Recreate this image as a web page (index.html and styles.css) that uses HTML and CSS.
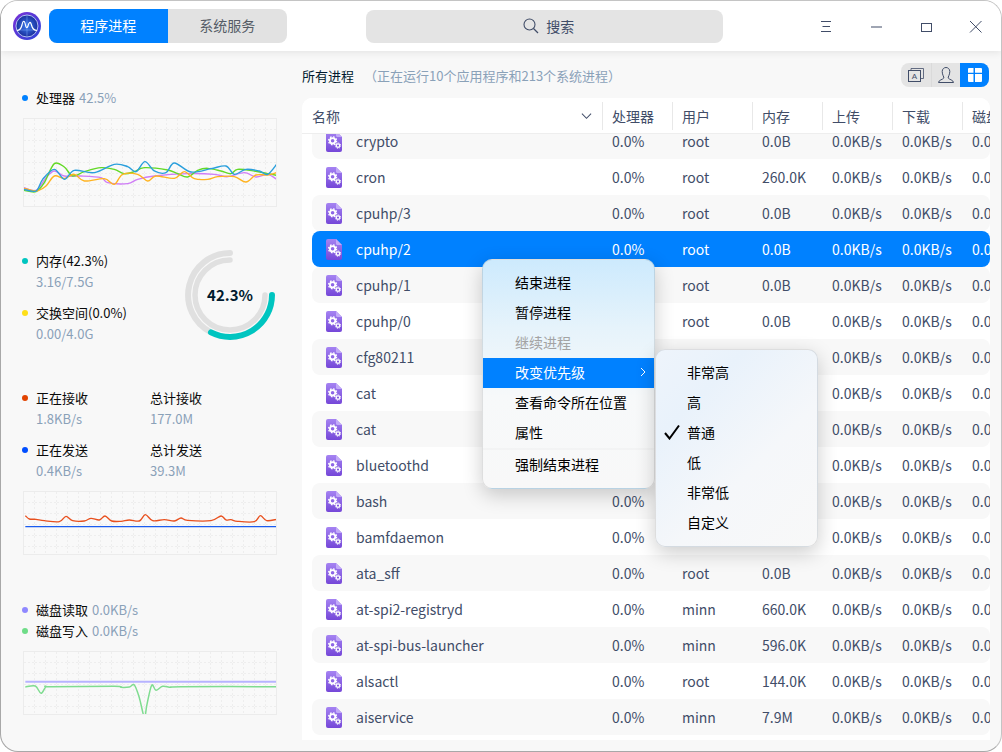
FILE: index.html
```html
<!DOCTYPE html>
<html lang="zh-CN">
<head>
  <meta charset="UTF-8">
  <meta name="viewport" content="width=device-width, initial-scale=1">
  <title>系统监视器</title>
  <link rel="stylesheet" href="styles.css">
</head>
<body>

<svg class="defs">
  <defs>
    <linearGradient id="docFill" x1="0" y1="0" x2="0" y2="1">
      <stop offset="0" stop-color="#a583f2"/>
      <stop offset="1" stop-color="#7547d8"/>
    </linearGradient>
    <linearGradient id="logoRing" x1="0" y1="0" x2="1" y2="1">
      <stop offset="0" stop-color="#7a2fd6"/>
      <stop offset="1" stop-color="#2b45d8"/>
    </linearGradient>
    <radialGradient id="logoFace">
      <stop offset="0" stop-color="#3a7cf0"/>
      <stop offset="1" stop-color="#1a2f9c"/>
    </radialGradient>
    <pattern id="grid" width="11" height="11" patternUnits="userSpaceOnUse">
      <path d="M10.5 0V11M0 10.5H11" stroke="#eeeeee" stroke-width="1" stroke-dasharray="2 2" fill="none"/>
    </pattern>
    <symbol id="proc" viewBox="0 0 16 21">
      <path d="M2 0H10L16 6V19A2 2 0 0 1 14 21H2A2 2 0 0 1 0 19V2A2 2 0 0 1 2 0Z" fill="url(#docFill)"/>
      <path d="M10 0L16 6H11.5A1.5 1.5 0 0 1 10 4.5Z" fill="#c2aaf8"/>
      <circle cx="6.6" cy="9.8" r="2.7" fill="none" stroke="#fff" stroke-width="1.8"/>
      <circle cx="6.6" cy="9.8" r="4" fill="none" stroke="#fff" stroke-width="1.3" stroke-dasharray="1.6 1.54"/>
      <circle cx="12" cy="14.6" r="1.7" fill="none" stroke="#fff" stroke-width="1.2"/>
      <circle cx="12" cy="14.6" r="2.7" fill="none" stroke="#fff" stroke-width="1" stroke-dasharray="1.1 1.02"/>
    </symbol>
  </defs>
</svg>

<div class="window">

  <header class="titlebar">
    <svg class="logo" viewBox="0 0 28 28">
      <circle cx="14" cy="14" r="14" fill="url(#logoRing)"/>
      <circle cx="14" cy="14" r="11" fill="url(#logoFace)"/>
      <circle cx="14" cy="14" r="11" fill="none" stroke="#cfe2ff" stroke-width=".8"/>
      <path d="M4 18H24M14 3V25" stroke="#7fa8f5" stroke-width=".5"/>
      <path d="M4 18.5C7 18.5 8 17 9 13C10 8 11.5 8 12.5 13C13 16 14 16.5 15 14C16 10 17.5 9 18.5 13C19.5 17 21 18.5 24 18.5" fill="none" stroke="#fff" stroke-width="1.2"/>
    </svg>
    <div class="tabs">
      <div class="tab tab-on">程序进程</div>
      <div class="tab">系统服务</div>
    </div>
    <div class="search">
      <svg class="search-icon" viewBox="0 0 16 16">
        <circle cx="6.5" cy="6.5" r="5.5" fill="none" stroke="#414d68" stroke-width="1.1"/>
        <path d="M10.5 10.5L15 15" stroke="#414d68" stroke-width="1.2"/>
      </svg>
      <span>搜索</span>
    </div>
    <div class="win-btns">
      <div class="win-btn"><svg viewBox="0 0 16 16"><path d="M3 3.500H13M4.500 8.500H12M3 13.500H13" stroke="#414d68" fill="none"/></svg></div>
      <div class="win-btn"><svg viewBox="0 0 16 16"><path d="M3 9H14" stroke="#414d68" stroke-width="1.100" fill="none"/></svg></div>
      <div class="win-btn"><svg viewBox="0 0 16 16"><rect x="3.500" y="5.500" width="10" height="8" stroke="#414d68" fill="none"/></svg></div>
      <div class="win-btn"><svg viewBox="0 0 16 16"><path d="M2 3L13.500 14.500M13.500 3L2 14.500" stroke="#414d68" fill="none"/></svg></div>
    </div>
  </header>

  <div class="content">

    <aside class="sidebar">

      <section class="sec-cpu">
        <div class="metric-head"><i class="dot dot-cpu"></i><span>处理器</span><span class="val">42.5%</span></div>
        <svg class="chart chart-tall">
          <rect width="100%" height="100%" fill="url(#grid)"/>
          <g transform="scale(.3333) translate(-69 -354)" fill="none" stroke-width="4.200">
            <path stroke="#cf7df6" data-pts="69,560 105,568 135,530 160,510 190,525 240,525 300,530 320,545 380,548 410,535 460,525 560,518 640,520 680,527 730,515 765,528 800,520 827,535"/>
            <path stroke="#62d926" data-pts="69,568 105,572 130,545 160,488 190,498 215,525 250,512 300,500 340,505 370,518 400,512 430,500 500,507 530,518 560,528 590,508 620,502 660,510 690,518 710,505 760,510 800,518 827,523"/>
            <path stroke="#ffb320" data-pts="69,562 105,570 135,555 160,525 190,532 220,520 250,540 310,533 340,550 365,520 410,520 440,540 465,525 520,532 550,512 580,533 620,535 650,527 700,527 735,543 765,522 800,522 827,515"/>
            <path stroke="#2a9fdc" data-pts="69,565 105,570 125,535 160,505 190,535 220,508 280,515 340,490 380,497 405,512 432,482 460,510 495,515 520,486 570,513 630,503 675,495 700,520 735,505 775,510 800,520 827,490"/>
          </g>
        </svg>
      </section>

      <section class="sec-mem">
        <div class="mem-text">
          <div class="metric">
            <div class="metric-head"><i class="dot dot-mem"></i><span>内存(42.3%)</span></div>
            <div class="val metric-val">3.16/7.5G</div>
          </div>
          <div class="metric">
            <div class="metric-head"><i class="dot dot-swap"></i><span>交换空间(0.0%)</span></div>
            <div class="val metric-val">0.00/4.0G</div>
          </div>
        </div>
        <div class="gauge">
          <svg viewBox="0 0 90 90">
            <g fill="none" stroke-linecap="round">
              <path d="M26 82.400A42 42 0 0 1 45 3" stroke="#e0e0e0" stroke-width="6"/>
              <path d="M80 45A35 35 0 1 1 45 10" stroke="#e0e0e0" stroke-width="5.500"/>
              <path d="M87 45A42 42 0 0 1 26 82.400" stroke="#00c5c0" stroke-width="6"/>
            </g>
          </svg>
          <div class="gauge-num">42.3%</div>
        </div>
      </section>

      <section class="sec-net">
        <div class="net-grid">
          <div class="metric">
            <div class="metric-head"><i class="dot dot-recv"></i><span>正在接收</span></div>
            <div class="val metric-val">1.8KB/s</div>
          </div>
          <div class="metric">
            <div>总计接收</div>
            <div class="val">177.0M</div>
          </div>
          <div class="metric">
            <div class="metric-head"><i class="dot dot-send"></i><span>正在发送</span></div>
            <div class="val metric-val">0.4KB/s</div>
          </div>
          <div class="metric">
            <div>总计发送</div>
            <div class="val">39.3M</div>
          </div>
        </div>
        <svg class="chart">
          <rect width="100%" height="100%" fill="url(#grid)"/>
          <g transform="scale(.3333) translate(-69 -784)" fill="none" stroke-width="4">
            <path stroke="#e8501e" data-pts="73,855 85,865 105,866 130,870 175,873 195,857 215,870 250,871 270,863 295,868 312,856 332,871 360,872 385,868 415,871 433,852 455,870 490,867 520,871 540,862 560,869 630,870 660,856 675,868 690,867 710,872 760,873 778,855 797,870 827,866"/>
            <path stroke="#1a5cf0" d="M73 888H827"/>
          </g>
        </svg>
      </section>

      <section class="sec-disk">
        <div class="metric-head"><i class="dot dot-read"></i><span>磁盘读取</span><span class="val">0.0KB/s</span></div>
        <div class="metric-head"><i class="dot dot-write"></i><span>磁盘写入</span><span class="val">0.0KB/s</span></div>
        <svg class="chart">
          <rect width="100%" height="100%" fill="url(#grid)"/>
          <g transform="scale(.3333) translate(-69 -183)" fill="none">
            <path stroke="#b7b3ff" stroke-width="6" d="M73 272H827"/>
            <path stroke="#7fdc90" stroke-width="4.500" data-pts="73,288 103,285 120,307 135,287 150,287 340,286 360,289 385,288 400,282 415,320 430,378 438,340 452,283 465,298 485,286 510,289 540,287 827,287"/>
          </g>
        </svg>
      </section>

    </aside>

    <main class="main">
      <div class="main-top">
        <div class="heading">所有进程<span class="heading-sub">（正在运行10个应用程序和213个系统进程）</span></div>
        <div class="views">
          <div class="view">
            <svg class="view-text" viewBox="0 0 16 14"><path d="M3 2.500V.5H15.500V10.500H12.500" fill="none" stroke="#414d68" stroke-width=".8"/><rect x=".5" y="2.500" width="12" height="11" fill="none" stroke="#414d68"/><text x="6.500" y="11" class="view-a">A</text></svg>
          </div>
          <div class="view">
            <svg viewBox="0 0 18 18"><path d="M1.500 16.500H16.500C16.500 14 12 13.500 11.200 12C10.800 11 12.800 9 12.800 5.500C12.800 3 11 1.500 9 1.500C7 1.500 5.200 3 5.200 5.500C5.200 9 7.200 11 6.800 12C6 13.500 1.500 14 1.500 16.500Z" fill="none" stroke="#414d68"/></svg>
          </div>
          <div class="view view-on">
            <svg viewBox="0 0 14 14"><path d="M1 0H5.500V4.700H0V1A1 1 0 0 1 1 0ZM7 0H13A1 1 0 0 1 14 1V4.700H7ZM0 6H5.500V14H1A1 1 0 0 1 0 13ZM7 6H14V13A1 1 0 0 1 13 14H7Z" fill="#fff"/></svg>
          </div>
        </div>
      </div>

      <div class="table">
        <div class="thead">
          <div class="th th-name">名称<svg class="sort" viewBox="0 0 12 8"><path d="M1 1.500L6 6.500L11 1.500" fill="none" stroke="#414d68" stroke-width="1.100"/></svg></div>
          <div class="th">处理器</div>
          <div class="th">用户</div>
          <div class="th">内存</div>
          <div class="th">上传</div>
          <div class="th">下载</div>
          <div class="th">磁盘读取</div>
        </div>
        <div class="rows">
          <div class="row alt"><div class="name"><svg class="proc"><use href="#proc"/></svg>crypto</div><div>0.0%</div><div>root</div><div>0.0B</div><div>0.0KB/s</div><div>0.0KB/s</div><div>0.0KB/s</div></div>
          <div class="row"><div class="name"><svg class="proc"><use href="#proc"/></svg>cron</div><div>0.0%</div><div>root</div><div>260.0K</div><div>0.0KB/s</div><div>0.0KB/s</div><div>0.0KB/s</div></div>
          <div class="row alt"><div class="name"><svg class="proc"><use href="#proc"/></svg>cpuhp/3</div><div>0.0%</div><div>root</div><div>0.0B</div><div>0.0KB/s</div><div>0.0KB/s</div><div>0.0KB/s</div></div>
          <div class="row selected"><div class="name"><svg class="proc"><use href="#proc"/></svg>cpuhp/2</div><div>0.0%</div><div>root</div><div>0.0B</div><div>0.0KB/s</div><div>0.0KB/s</div><div>0.0KB/s</div></div>
          <div class="row alt"><div class="name"><svg class="proc"><use href="#proc"/></svg>cpuhp/1</div><div></div><div>root</div><div>0.0B</div><div>0.0KB/s</div><div>0.0KB/s</div><div>0.0KB/s</div></div>
          <div class="row"><div class="name"><svg class="proc"><use href="#proc"/></svg>cpuhp/0</div><div></div><div>root</div><div>0.0B</div><div>0.0KB/s</div><div>0.0KB/s</div><div>0.0KB/s</div></div>
          <div class="row alt"><div class="name"><svg class="proc"><use href="#proc"/></svg>cfg80211</div><div></div><div></div><div></div><div>0.0KB/s</div><div>0.0KB/s</div><div>0.0KB/s</div></div>
          <div class="row"><div class="name"><svg class="proc"><use href="#proc"/></svg>cat</div><div></div><div></div><div></div><div>0.0KB/s</div><div>0.0KB/s</div><div>0.0KB/s</div></div>
          <div class="row alt"><div class="name"><svg class="proc"><use href="#proc"/></svg>cat</div><div></div><div></div><div></div><div>0.0KB/s</div><div>0.0KB/s</div><div>0.0KB/s</div></div>
          <div class="row"><div class="name"><svg class="proc"><use href="#proc"/></svg>bluetoothd</div><div></div><div></div><div></div><div>0.0KB/s</div><div>0.0KB/s</div><div>0.0KB/s</div></div>
          <div class="row alt"><div class="name"><svg class="proc"><use href="#proc"/></svg>bash</div><div>0.0%</div><div></div><div></div><div>0.0KB/s</div><div>0.0KB/s</div><div>0.0KB/s</div></div>
          <div class="row"><div class="name"><svg class="proc"><use href="#proc"/></svg>bamfdaemon</div><div>0.0%</div><div></div><div></div><div>0.0KB/s</div><div>0.0KB/s</div><div>0.0KB/s</div></div>
          <div class="row alt"><div class="name"><svg class="proc"><use href="#proc"/></svg>ata_sff</div><div>0.0%</div><div>root</div><div>0.0B</div><div>0.0KB/s</div><div>0.0KB/s</div><div>0.0KB/s</div></div>
          <div class="row"><div class="name"><svg class="proc"><use href="#proc"/></svg>at-spi2-registryd</div><div>0.0%</div><div>minn</div><div>660.0K</div><div>0.0KB/s</div><div>0.0KB/s</div><div>0.0KB/s</div></div>
          <div class="row alt"><div class="name"><svg class="proc"><use href="#proc"/></svg>at-spi-bus-launcher</div><div>0.0%</div><div>minn</div><div>596.0K</div><div>0.0KB/s</div><div>0.0KB/s</div><div>0.0KB/s</div></div>
          <div class="row"><div class="name"><svg class="proc"><use href="#proc"/></svg>alsactl</div><div>0.0%</div><div>root</div><div>144.0K</div><div>0.0KB/s</div><div>0.0KB/s</div><div>0.0KB/s</div></div>
          <div class="row alt"><div class="name"><svg class="proc"><use href="#proc"/></svg>aiservice</div><div>0.0%</div><div>minn</div><div>7.9M</div><div>0.0KB/s</div><div>0.0KB/s</div><div>0.0KB/s</div></div>
        </div>
      </div>
    </main>

  </div>

  <!-- right click menu -->
  <div class="menu">
    <div class="menu-item">结束进程</div>
    <div class="menu-item">暂停进程</div>
    <div class="menu-item off">继续进程</div>
    <div class="menu-item hi">改变优先级<svg class="arrow" viewBox="0 0 6 10"><path d="M1 1L5 5L1 9" fill="none" stroke="#fff"/></svg></div>
    <div class="menu-item">查看命令所在位置</div>
    <div class="menu-item">属性</div>
    <div class="menu-sep"></div>
    <div class="menu-item">强制结束进程</div>
  </div>
  <div class="menu submenu">
    <div class="menu-item">非常高</div>
    <div class="menu-item">高</div>
    <div class="menu-item"><svg class="check" viewBox="0 0 16 16"><path d="M1 9L5.500 14.500L15 1.500" fill="none" stroke="#000" stroke-width="2"/></svg>普通</div>
    <div class="menu-item">低</div>
    <div class="menu-item">非常低</div>
    <div class="menu-item">自定义</div>
  </div>

</div>

<script src="script.js"></script>
</body>
</html>
```

FILE: styles.css
```css
* {
  box-sizing: border-box;
}
body {
  margin: 0;
  background: #fff;
  font-family: "Noto Sans CJK SC", "Noto Sans", sans-serif;
  font-size: 14px;
  color: #000;
}
.defs {
  display: block;
  width: 0;
  height: 0;
}
.window {
  position: relative;
  width: 1002px;
  height: 752px;
  border: 1px solid #a8a8a8;
  border-top-color: #c4c4c4;
  border-right-color: #c4c4c4;
  border-radius: 18px;
  overflow: hidden;
  display: flex;
  flex-direction: column;
  background: #f8f8f8;
}

/* title bar */
.titlebar {
  position: relative;
  z-index: 2;
  height: 50px;
  flex: none;
  display: flex;
  align-items: center;
  background: #fff;
  box-shadow: 0 2px 7px rgba(0,0,0,0.08);
}
.logo {
  width: 28px;
  height: 28px;
  margin: 0 8px 0 12px;
}
.tabs {
  display: flex;
  width: 238px;
  height: 34px;
  border-radius: 8px;
  overflow: hidden;
  background: #e2e2e2;
  margin-top: -1px;
}
.tab {
  width: 119px;
  line-height: 33px;
  text-align: center;
  color: #555c66;
}
.tab-on {
  background: #0081ff;
  color: #fff;
}
.search {
  width: 358px;
  height: 33px;
  margin-left: 79px;
  padding-left: 9px;
  border-radius: 8px;
  background: #e4e4e4;
  display: flex;
  align-items: center;
  justify-content: center;
  gap: 7px;
  color: #414d68;
}
.search-icon {
  width: 16px;
  height: 16px;
}
.win-btns {
  display: flex;
  margin-left: 78px;
}
.win-btn {
  width: 50px;
  height: 50px;
  display: flex;
  align-items: center;
  justify-content: center;
}
.win-btn svg {
  width: 16px;
  height: 16px;
}

.content {
  flex: 1;
  display: flex;
  min-height: 0;
}

/* left side */
.sidebar {
  width: 289px;
  flex: none;
  padding: 36px 0 0 21px;
  font-size: 13px;
  color: #0a0a0a;
}
.metric-head {
  display: flex;
  align-items: center;
  line-height: 21px;
  height: 21px;
}
.metric-head .val {
  margin-left: 4px;
}
.dot {
  width: 6px;
  height: 6px;
  border-radius: 50%;
  margin-right: 8px;
  flex: none;
}
.dot-cpu { background: #0081ff; }
.dot-mem { background: #00c5c0; }
.dot-swap { background: #fedf19; }
.dot-recv { background: #e14300; }
.dot-send { background: #004eff; }
.dot-read { background: #8f88ff; }
.dot-write { background: #6fdc88; }
.val {
  color: #8aa1b8;
  font-size: 13px;
  line-height: 21px;
}
.metric-val {
  padding-left: 14px;
}
.metric {
  line-height: 21px;
  margin-bottom: 10px;
}
.chart {
  display: block;
  width: 254px;
  height: 64px;
  margin-left: 1px;
  border: 1px solid #ececec;
  background: #f9f9f9;
}
.chart-tall {
  height: 89px;
  margin-top: 10px;
}
.sec-mem {
  display: flex;
  margin-top: 43px;
  width: 254px;
}
.mem-text {
  width: 163px;
}
.gauge {
  position: relative;
  width: 90px;
  height: 90px;
}
.gauge svg {
  display: block;
  width: 90px;
  height: 90px;
}
.gauge-num {
  position: absolute;
  left: 0;
  right: 0;
  top: 34px;
  text-align: center;
  font-size: 15px;
  line-height: 22px;
  font-weight: 700;
  color: #001a2e;
}
.sec-net {
  margin-top: 33px;
}
.net-grid {
  display: grid;
  grid-template-columns: 128px 1fr;
}
.sec-disk {
  margin-top: 44px;
}
.sec-disk .chart {
  margin-top: 10px;
}

/* process table */
.main {
  flex: 1;
  min-width: 0;
  padding: 12px 11px 11px 12px;
  display: flex;
  flex-direction: column;
}
.main-top {
  display: flex;
  justify-content: space-between;
  align-items: center;
  height: 24px;
  margin-bottom: 11px;
}
.heading {
  color: #001a2e;
  font-size: 13px;
}
.heading-sub {
  color: #8aa1b8;
  font-size: 13px;
  margin-left: 10px;
}
.views {
  display: flex;
  height: 24px;
  margin-right: 1px;
  border-radius: 8px;
  overflow: hidden;
  background: #e4e4e4;
}
.view {
  width: 29px;
  display: flex;
  align-items: center;
  justify-content: center;
  border-left: 1px solid #dadada;
}
.view:first-child {
  border-left: none;
  width: 30px;
}
.view svg {
  width: 18px;
  height: 18px;
}
.view .view-text {
  width: 16px;
  height: 14px;
}
.view-on {
  background: #0081ff;
  border-left: none;
}
.view-on svg {
  width: 14px;
  height: 14px;
}
.view-a {
  font-size: 8px;
  font-family: "Liberation Sans", sans-serif;
  text-anchor: middle;
  fill: #414d68;
}
.table {
  flex: 1;
  min-height: 0;
  background: #fff;
  border-radius: 10px 10px 0 0;
  overflow: hidden;
}
.thead, .row {
  display: grid;
  grid-template-columns: 290px 70px 80px 70px 70px 70px 100px;
  white-space: nowrap;
  color: #414d68;
}
.thead {
  position: relative;
  z-index: 1;
  height: 36px;
  align-items: center;
  padding-left: 10px;
  background: #fff;
  border-bottom: 1px solid #eee;
}
.th {
  height: 28px;
  line-height: 28px;
  padding-left: 9px;
  border-left: 1px solid #e8e8e8;
  overflow: hidden;
}
.th-name {
  padding-left: 0;
  border-left: none;
  display: flex;
  justify-content: space-between;
  align-items: center;
  padding-right: 10px;
}
.sort {
  width: 11px;
  height: 8px;
}
.rows {
  margin-top: -11px;
  padding-left: 10px;
}
.row {
  height: 36px;
  line-height: 36px;
  border-radius: 8px;
}
.row > div {
  padding-left: 10px;
}
.row > .name {
  padding-left: 14px;
  display: flex;
  align-items: center;
}
.alt {
  background: #f8f8f8;
}
.selected {
  background: #0081ff;
  color: #fff;
}
.proc {
  width: 16px;
  height: 21px;
  margin-right: 14px;
  flex: none;
}

/* context menu */
.menu {
  position: absolute;
  z-index: 5;
  left: 481px;
  top: 258px;
  width: 173px;
  height: 230px;
  padding: 8px 0;
  border-radius: 10px;
  border: 1px solid rgba(0,0,0,0.1);
  background: linear-gradient(180deg, #cdeafd 0%, #e6f3fb 30%, #f7f9fa 60%, #f8f8f8 100%);
  box-shadow: 0 6px 20px rgba(0,0,0,0.2);
}
.submenu {
  left: 654px;
  top: 348px;
  width: 163px;
  height: 198px;
  background: linear-gradient(135deg, #eef4fb 0%, #e9f2fb 25%, #f5f7fa 60%, #f8f8f8 100%);
}
.menu-item {
  height: 30px;
  padding-left: 32px;
  padding-bottom: 2px;
  display: flex;
  align-items: center;
}
.submenu .menu-item {
  padding-left: 31px;
}
.off {
  color: #a3a3a3;
}
.hi {
  background: #0081ff;
  color: #fff;
  justify-content: space-between;
  padding-right: 8px;
}
.arrow {
  width: 6px;
  height: 10px;
}
.menu-sep {
  height: 2px;
  background: rgba(0,0,0,0.02);
}
.check {
  width: 16px;
  height: 16px;
  margin-left: -23px;
  margin-right: 7px;
}
```

FILE: script.js
```js
// turn the sampled points into a smooth line
document.querySelectorAll('path[data-pts]').forEach(function(line) {
  const p = line.getAttribute('data-pts').trim().split(/\s+/).map(function(s) {
    return s.split(',').map(Number);
  });
  let d = 'M' + p[0][0] + ' ' + p[0][1];
  for (let i = 0; i < p.length - 1; i++) {
    const a = p[i - 1] || p[i];
    const b = p[i];
    const c = p[i + 1];
    const e = p[i + 2] || c;
    d += 'C' + (b[0] + (c[0] - a[0]) / 6) + ' ' + (b[1] + (c[1] - a[1]) / 6) + ' ' +
      (c[0] - (e[0] - b[0]) / 6) + ' ' + (c[1] - (e[1] - b[1]) / 6) + ' ' + c[0] + ' ' + c[1];
  }
  line.setAttribute('d', d);
});
```
